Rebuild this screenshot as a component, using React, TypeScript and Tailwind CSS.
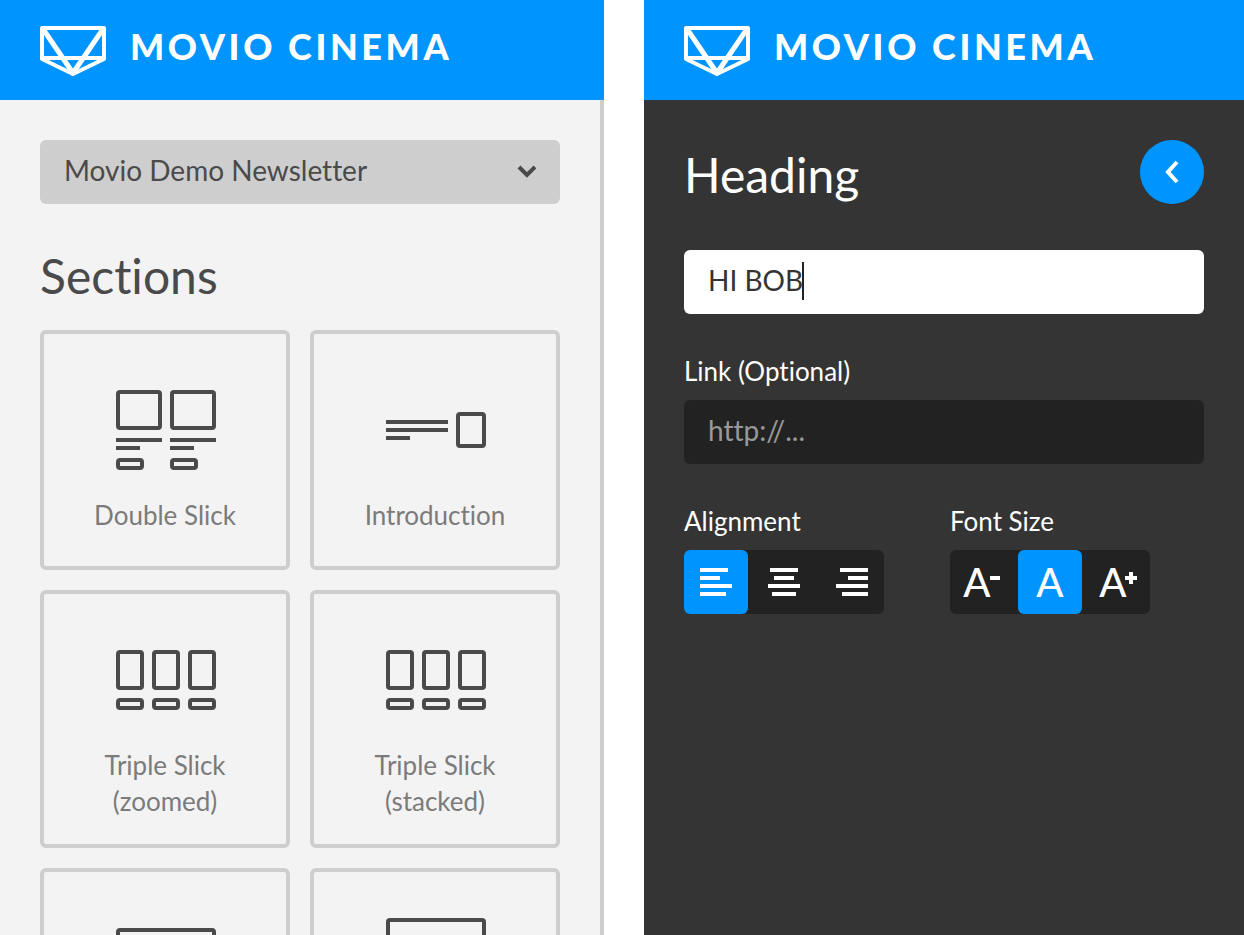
import { useState } from "react";
import type { ReactNode } from "react";

interface Section {
  id: string;
  label?: string;
  icon: ReactNode;
}

const Box = ({ x, y, w, h }: { x: number; y: number; w: number; h: number }) => (
  <rect x={x + 2} y={y + 2} width={w - 4} height={h - 4} rx="2" fill="none" stroke="currentColor" strokeWidth="4" />
);

const Line = ({ x, y, w }: { x: number; y: number; w: number }) => (
  <rect x={x} y={y} width={w} height="4" fill="currentColor" />
);

const DoubleIcon = () => (
  <svg width="100" height="100" aria-hidden="true">
    {[0, 54].map((x) => (
      <g key={x}>
        <Box x={x} y={10} w={46} h={40} />
        <Line x={x} y={58} w={46} />
        <Line x={x} y={66} w={24} />
        <Box x={x} y={78} w={28} h={12} />
      </g>
    ))}
  </svg>
);

const IntroIcon = () => (
  <svg width="100" height="100" aria-hidden="true">
    <Line x={0} y={40} w={62} />
    <Line x={0} y={48} w={62} />
    <Line x={0} y={56} w={24} />
    <Box x={70} y={32} w={30} h={36} />
  </svg>
);

const TripleIcon = () => (
  <svg width="100" height="90" aria-hidden="true">
    {[0, 36, 72].map((x) => (
      <g key={x}>
        <Box x={x} y={10} w={28} h={40} />
        <Box x={x} y={58} w={28} h={12} />
      </g>
    ))}
  </svg>
);

const SingleIcon = ({ top }: { top: number }) => (
  <svg width="100" height="100" aria-hidden="true">
    <Box x={0} y={top} w={100} h={60} />
    <Line x={0} y={top + 68} w={100} />
    <Line x={0} y={top + 76} w={62} />
  </svg>
);

const sections: Section[] = [
  { id: "double", label: "Double Slick", icon: <DoubleIcon /> },
  { id: "intro", label: "Introduction", icon: <IntroIcon /> },
  { id: "triple-zoomed", label: "Triple Slick (zoomed)", icon: <TripleIcon /> },
  { id: "triple-stacked", label: "Triple Slick (stacked)", icon: <TripleIcon /> },
  { id: "single", icon: <SingleIcon top={10} /> },
  { id: "single-tall", icon: <SingleIcon top={0} /> },
];

const Header = () => (
  <header className="flex h-25 shrink-0 items-center gap-6 bg-[#0094ff] px-10 pt-0.5 text-white">
    <svg width="66" height="50" viewBox="0 0 66 50" fill="none" stroke="currentColor" strokeWidth="4" strokeLinejoin="round" aria-hidden="true">
      <path d="M2 2h62v31L33 48 2 33z" />
      <path d="M2 32h62" />
      <path d="M3 3l30 44L63 3" strokeWidth="5" />
    </svg>
    <span className="pb-2.5 text-[36px] leading-none font-black tracking-widest whitespace-nowrap">MOVIO CINEMA</span>
  </header>
);

const alignments = [
  { name: "Left", lines: [[0, 28], [0, 20], [0, 32], [0, 26]] },
  { name: "Center", lines: [[2, 28], [6, 20], [0, 32], [4, 24]] },
  { name: "Right", lines: [[4, 28], [12, 20], [0, 32], [6, 26]] },
];

const sizes = [
  { name: "Smaller", mark: "minus" },
  { name: "Normal", mark: "" },
  { name: "Larger", mark: "plus" },
];

const Segment = ({ label, active, onClick, children }: { label: string; active: boolean; onClick: () => void; children: ReactNode }) => (
  <button
    type="button"
    aria-label={label}
    aria-pressed={active}
    onClick={onClick}
    className={`flex size-16 items-center justify-center rounded-md ${active ? "bg-[#0094ff]" : ""}`}
  >
    {children}
  </button>
);

const SectionsPanel = () => (
  <div className="flex flex-1 flex-col overflow-hidden border-r-4 border-[#cecece] bg-[#f3f3f3] text-[#4a4a4a]">
    <div className="flex flex-col gap-10 p-10">
      <div className="relative">
        <select
          aria-label="Template"
          className="h-16 w-full appearance-none rounded-md bg-[#cecece] px-6 pb-1 text-[28px]"
        >
          <option>Movio Demo Newsletter</option>
        </select>
        <svg width="20" height="14" className="pointer-events-none absolute top-6 right-6" fill="none" stroke="currentColor" strokeWidth="4" aria-hidden="true">
          <path d="M3 3l8 8 8-8" />
        </svg>
      </div>

      <section>
        <h2 className="text-[48px] leading-16">Sections</h2>
        <div className="mt-[22px] grid grid-cols-2 gap-5">
          {sections.map((s) => (
            <button
              key={s.id}
              type="button"
              aria-label={s.label ? undefined : "Section"}
              className="flex min-h-[240px] flex-col items-center rounded-md border-4 border-[#cecece] px-10 pt-[46px] pb-[25px]"
            >
              <span className="pl-0.5 text-[#4a4a4a]">{s.icon}</span>
              {s.label && <span className="mt-[17px] text-[26px] leading-9 text-[#7b7b7b]">{s.label}</span>}
            </button>
          ))}
        </div>
      </section>
    </div>
  </div>
);

const HeadingPanel = () => {
  const [text, setText] = useState("HI BOB");
  const [link, setLink] = useState("");
  const [align, setAlign] = useState("Left");
  const [size, setSize] = useState("Normal");

  return (
    <div className="flex-1 bg-[#343434] p-10 text-white">
      <div className="flex items-center justify-between">
        <h2 className="pt-1.5 text-[48px] leading-[58px]">Heading</h2>
        <button type="button" aria-label="Back" className="flex size-16 items-center justify-center rounded-full bg-[#0094ff]">
          <svg width="16" height="24" fill="none" stroke="currentColor" strokeWidth="4" aria-hidden="true">
            <path d="M13 2L4 12l9 10" />
          </svg>
        </button>
      </div>

      <div className="relative mt-[46px]">
        <input
          aria-label="Heading text"
          value={text}
          onChange={(e) => setText(e.target.value)}
          className="h-16 w-full rounded-md bg-white px-6 pb-1 text-[28px] text-[#343434]"
        />
        {/* Text cursor */}
        <span className="absolute top-3 left-[118px] h-[38px] w-0.5 bg-[#222222]" />
      </div>

      <label htmlFor="link" className="mt-[39px] block text-[26px] leading-9">
        Link (Optional)
      </label>
      <input
        id="link"
        value={link}
        onChange={(e) => setLink(e.target.value)}
        placeholder="http://..."
        className="mt-[11px] h-16 w-full rounded-md bg-[#222222] px-6 pb-1 text-[28px] placeholder:text-[#999999]"
      />

      <div className="mt-[39px] grid grid-cols-2 gap-3">
        <div role="group" aria-labelledby="alignment">
          <p id="alignment" className="text-[26px] leading-9">Alignment</p>
          <div className="mt-[11px] flex w-fit gap-1 rounded-md bg-[#222222]">
            {alignments.map((a) => (
              <Segment key={a.name} label={a.name} active={align === a.name} onClick={() => setAlign(a.name)}>
                <svg width="32" height="28" aria-hidden="true">
                  {a.lines.map(([x, w], i) => (
                    <Line key={i} x={x} y={i * 8} w={w} />
                  ))}
                </svg>
              </Segment>
            ))}
          </div>
        </div>

        <div role="group" aria-labelledby="font-size">
          <p id="font-size" className="text-[26px] leading-9">Font Size</p>
          <div className="mt-[11px] flex w-fit gap-1 rounded-md bg-[#222222]">
            {sizes.map((s) => (
              <Segment key={s.name} label={s.name} active={size === s.name} onClick={() => setSize(s.name)}>
                <span className="text-[40px] leading-16 font-medium">A</span>
                {s.mark && (
                  <svg width="12" height="12" className="mb-2 -ml-0.5" fill="none" stroke="currentColor" strokeWidth="4" aria-hidden="true">
                    <path d={s.mark === "plus" ? "M0 6h12M6 0v12" : "M1 6h10"} />
                  </svg>
                )}
              </Segment>
            ))}
          </div>
        </div>
      </div>
    </div>
  );
};

const App = () => (
  <div className="flex h-screen gap-10 overflow-hidden bg-white font-['Lato',sans-serif] [font-variant-ligatures:none]">
    <div className="flex min-w-0 flex-[151] flex-col">
      <Header />
      <SectionsPanel />
    </div>
    <div className="flex min-w-0 flex-[150] flex-col">
      <Header />
      <HeadingPanel />
    </div>
  </div>
);

export default App;
